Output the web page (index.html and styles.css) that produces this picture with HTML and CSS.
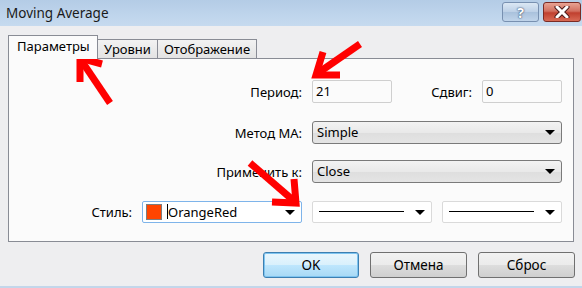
FILE: index.html
```html
<!DOCTYPE html>
<html>
<head>
  <link rel="stylesheet" href="styles.css">
</head>
<body>

  <div class="window">
    <div class="titlebar">
      <span class="title">Moving Average</span>
      <div class="caption-buttons">
        <div class="cap-btn help">?</div>
        <div class="cap-btn close">
          <svg width="16" height="12" viewBox="0 0 16 12">
            <path d="M3 1 L13 11 M13 1 L3 11" stroke="#4a1a1a" stroke-width="5" stroke-linecap="round"/>
            <path d="M3 1 L13 11 M13 1 L3 11" stroke="#ffffff" stroke-width="3" stroke-linecap="round"/>
          </svg>
        </div>
      </div>
    </div>

    <div class="tabs">
      <div class="tab active">Параметры</div>
      <div class="tab">Уровни</div>
      <div class="tab">Отображение</div>
    </div>

    <div class="panel">
      <div class="row row-period">
        <label class="label wide">Период:</label>
        <div class="input w80">21</div>
        <label class="label shift">Сдвиг:</label>
        <div class="input w80">0</div>
      </div>

      <div class="row row-method">
        <label class="label wide">Метод MA:</label>
        <div class="select">Simple<span class="caret"></span></div>
      </div>

      <div class="row row-apply">
        <label class="label wide">Применить к:</label>
        <div class="select">Close<span class="caret"></span></div>
      </div>

      <div class="row row-style">
        <label class="label narrow">Стиль:</label>
        <div class="combo color-combo focused">
          <span class="swatch"></span>
          <span class="cursor"></span>OrangeRed
          <span class="caret"></span>
        </div>
        <div class="combo line-combo">
          <span class="line"></span>
          <span class="caret"></span>
        </div>
        <div class="combo line-combo">
          <span class="line"></span>
          <span class="caret"></span>
        </div>
      </div>
    </div>

    <div class="buttons">
      <button class="default">OK</button>
      <button>Отмена</button>
      <button>Сброс</button>
    </div>

    <!-- red hint arrows drawn over the dialog -->
    <svg class="arrows" width="582" height="288" viewBox="0 0 582 288">
      <g stroke="#ff0000" stroke-width="7" fill="none" stroke-linejoin="miter">
        <path d="M110 103 L81 60"/>
        <path d="M80 82 L80 58 L102 64"/>
        <path d="M360 44 L318 73"/>
        <path d="M340 75 L316 75 L323 52"/>
        <path d="M250 163 L294 201"/>
        <path d="M294 179 L296 203 L272 202"/>
      </g>
    </svg>
  </div>

</body>
</html>
```

FILE: styles.css
```css
body {
  margin: 0;
  font-family: "Noto Sans", "Open Sans", sans-serif;
  font-size: 13px;
  color: #000;
}

.window {
  position: relative;
  width: 582px;
  height: 288px;
  background: #eeeef0;
  border-bottom: 2px solid #c3d6ea;
  box-sizing: border-box;
  overflow: hidden;
}

.titlebar {
  height: 26px;
  display: flex;
  align-items: center;
  justify-content: space-between;
  background: linear-gradient(#b4cce6, #bfd5ec 60%, #c6daef);
}

.title {
  margin-left: 6px;
  font-size: 13.5px;
  color: #1a1a1a;
}

.caption-buttons {
  display: flex;
  gap: 4px;
  margin-right: 1px;
  align-self: flex-start;
  margin-top: 2px;
}

.cap-btn {
  width: 37px;
  height: 20px;
  box-sizing: border-box;
  border-radius: 3px;
  display: flex;
  align-items: center;
  justify-content: center;
}

.cap-btn.help {
  border: 1px solid #7890b0;
  background: linear-gradient(#dbe7f4, #bcd0e6 50%, #a9c1dc 51%, #c0d4ea);
  color: #fff;
  font-weight: bold;
  font-size: 14px;
  text-shadow: 0 0 2px #30486a, 0 0 1px #30486a;
}

.cap-btn.close {
  width: 38px;
  border: 1px solid #7a2b25;
  background: linear-gradient(#e8a393, #d27060 45%, #c0402f 55%, #d86a55);
}

.tabs {
  display: flex;
  align-items: flex-end;
  margin: 8px 0 0 8px;
  height: 24px;
}

.tab {
  height: 19px;
  box-sizing: border-box;
  padding: 0 6px;
  border: 1px solid #898c95;
  border-bottom: none;
  border-left: none;
  background: linear-gradient(#f2f2f2, #e3e3e3);
  line-height: 18px;
}

.tab.active {
  height: 24px;
  width: 90px;
  padding: 0 0 0 8px;
  border-left: 1px solid #898c95;
  background: #fbfbfb;
  line-height: 20px;
  position: relative;
  z-index: 1;
  margin-bottom: -1px;
}

.panel {
  margin: 0 8px 0 8px;
  height: 184px;
  box-sizing: border-box;
  border: 1px solid #898c95;
  background: #fbfbfb;
  padding-top: 21px;
}

.row {
  display: flex;
  align-items: center;
  height: 23px;
}

.row-method {
  margin-top: 18px;
}

.row-apply {
  margin-top: 16px;
}

.row-style {
  margin-top: 17px;
}

.label {
  text-align: right;
  margin-right: 10px;
}

.label.wide {
  width: 293px;
}

.label.shift {
  width: 80px;
}

.label.narrow {
  width: 123px;
}

.input {
  height: 23px;
  box-sizing: border-box;
  border: 1px solid #cfcfcf;
  border-radius: 2px;
  background: #fbfbfb;
  padding: 1px 3px;
  line-height: 18px;
}

.w80 {
  width: 80px;
}

.select {
  position: relative;
  width: 250px;
  height: 23px;
  box-sizing: border-box;
  border: 1px solid #7a7a7a;
  border-radius: 3px;
  background: linear-gradient(#f3f3f3, #e9e9e9 50%, #dedede 51%, #e4e4e4);
  padding: 0 4px;
  line-height: 21px;
}

.caret {
  position: absolute;
  right: 6px;
  top: 8px;
  width: 0;
  height: 0;
  border-left: 5px solid transparent;
  border-right: 5px solid transparent;
  border-top: 5px solid #000;
}

.combo {
  position: relative;
  height: 22px;
  box-sizing: border-box;
  border: 1px solid #dadada;
  border-radius: 2px;
  background: #fff;
  display: flex;
  align-items: center;
}

.color-combo {
  width: 160px;
  margin-right: 10px;
  padding-left: 3px;
}

.color-combo.focused {
  border-color: #7eb4ea;
}

.swatch {
  width: 14px;
  height: 14px;
  background: #ff4500;
  border: 1px solid #7d7d7d;
  margin-right: 5px;
}

.cursor {
  width: 1px;
  height: 15px;
  background: #000;
}

.line-combo {
  width: 120px;
  margin-right: 10px;
}

.line {
  margin-left: 6px;
  width: 85px;
  height: 1px;
  background: #000;
}

.buttons {
  display: flex;
  justify-content: flex-end;
  gap: 11px;
  margin: 10px 7px 0 0;
}

.buttons button {
  width: 97px;
  height: 26px;
  font-family: inherit;
  font-size: 13.5px;
  color: #000;
  border: 1px solid #707070;
  border-radius: 3px;
  background: linear-gradient(#f2f2f2, #ebebeb 50%, #dddddd 51%, #cfcfcf);
  padding: 0;
}

.buttons button.default {
  width: 96px;
  border-color: #3c7fb1;
  background: linear-gradient(#eaf6fd, #d9f0fc 50%, #bee6fd 51%, #a7d9f5);
  box-shadow: inset 0 0 0 1px #7ec4f0;
}

.arrows {
  position: absolute;
  left: 0;
  top: 0;
  pointer-events: none;
}
```
